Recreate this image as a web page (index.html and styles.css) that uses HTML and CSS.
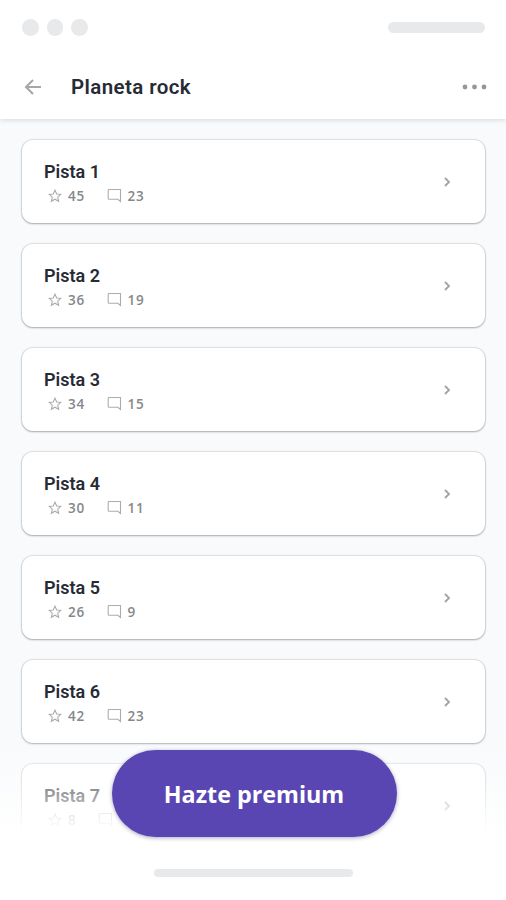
FILE: index.html
```
<!DOCTYPE html>
<html lang="es">
<head>
    <meta charset="UTF-8">
    <meta name="viewport" content="width=device-width, initial-scale=1.0">
    <title>Planeta rock</title>
    <link rel="stylesheet" href="styles.css">
</head>
<body>
    <!-- Shared icons -->
    <svg class="icon-defs" aria-hidden="true">
        <symbol id="icon-star" viewBox="0 0 14 14">
            <path d="M7 1.2l1.7 3.8 4.1.4-3.1 2.7.9 4.2L7 10.2l-3.6 2.1.9-4.2L1.2 5.4l4.1-.4z"/>
        </symbol>
        <symbol id="icon-comment" viewBox="0 0 15 15">
            <path d="M2 1.5h11.5v12l-2.6-2.2H2a.8.8 0 0 1-.8-.8V2.3a.8.8 0 0 1 .8-.8z"/>
        </symbol>
        <symbol id="icon-chevron" viewBox="0 0 8 12">
            <path d="M2 2l4 4-4 4"/>
        </symbol>
    </svg>

    <div class="phone">
        <header class="top">
            <div class="status-bar">
                <div class="dots"><span></span><span></span><span></span></div>
                <span class="pill"></span>
            </div>
            <div class="nav-bar">
                <svg class="back" viewBox="0 0 18 18"><path d="M17 9H2M9 2L2 9l7 7"/></svg>
                <h1>Planeta rock</h1>
                <svg class="more" viewBox="0 0 26 6"><circle cx="3" cy="3" r="2.4"/><circle cx="12.5" cy="3" r="2.4"/><circle cx="22" cy="3" r="2.4"/></svg>
            </div>
        </header>

        <main class="track-list">
            <article class="track">
                <div class="track-info">
                    <h2>Pista 1</h2>
                    <div class="stats">
                        <svg class="star"><use href="#icon-star"/></svg><span>45</span>
                        <svg class="comment"><use href="#icon-comment"/></svg><span>23</span>
                    </div>
                </div>
                <svg class="chevron"><use href="#icon-chevron"/></svg>
            </article>
            <article class="track">
                <div class="track-info">
                    <h2>Pista 2</h2>
                    <div class="stats">
                        <svg class="star"><use href="#icon-star"/></svg><span>36</span>
                        <svg class="comment"><use href="#icon-comment"/></svg><span>19</span>
                    </div>
                </div>
                <svg class="chevron"><use href="#icon-chevron"/></svg>
            </article>
            <article class="track">
                <div class="track-info">
                    <h2>Pista 3</h2>
                    <div class="stats">
                        <svg class="star"><use href="#icon-star"/></svg><span>34</span>
                        <svg class="comment"><use href="#icon-comment"/></svg><span>15</span>
                    </div>
                </div>
                <svg class="chevron"><use href="#icon-chevron"/></svg>
            </article>
            <article class="track">
                <div class="track-info">
                    <h2>Pista 4</h2>
                    <div class="stats">
                        <svg class="star"><use href="#icon-star"/></svg><span>30</span>
                        <svg class="comment"><use href="#icon-comment"/></svg><span>11</span>
                    </div>
                </div>
                <svg class="chevron"><use href="#icon-chevron"/></svg>
            </article>
            <article class="track">
                <div class="track-info">
                    <h2>Pista 5</h2>
                    <div class="stats">
                        <svg class="star"><use href="#icon-star"/></svg><span>26</span>
                        <svg class="comment"><use href="#icon-comment"/></svg><span>9</span>
                    </div>
                </div>
                <svg class="chevron"><use href="#icon-chevron"/></svg>
            </article>
            <article class="track">
                <div class="track-info">
                    <h2>Pista 6</h2>
                    <div class="stats">
                        <svg class="star"><use href="#icon-star"/></svg><span>42</span>
                        <svg class="comment"><use href="#icon-comment"/></svg><span>23</span>
                    </div>
                </div>
                <svg class="chevron"><use href="#icon-chevron"/></svg>
            </article>
            <article class="track">
                <div class="track-info">
                    <h2>Pista 7</h2>
                    <div class="stats">
                        <svg class="star"><use href="#icon-star"/></svg><span>8</span>
                        <svg class="comment"><use href="#icon-comment"/></svg>
                    </div>
                </div>
                <svg class="chevron"><use href="#icon-chevron"/></svg>
            </article>
        </main>

        <!-- Fades out the end of the list behind the button -->
        <div class="premium-overlay">
            <button class="premium-btn">Hazte premium</button>
            <span class="home-indicator"></span>
        </div>
    </div>
</body>
</html>
```
FILE: styles.css
```
* {
    box-sizing: border-box;
}

body {
    margin: 0;
    background: #fff;
    font-family: Roboto, "Liberation Sans", sans-serif;
    color: #272b35;
}

h1,
h2 {
    margin: 0;
    font-weight: 600;
}

.icon-defs {
    display: none;
}

.phone {
    position: relative;
    display: flex;
    flex-direction: column;
    height: 900px;
    overflow: hidden;
    background: #f8fafb;
}

/* Header */
.top {
    flex: none;
    height: 119px;
    background: #fff;
    box-shadow: 0 1px 5px rgba(40, 50, 60, 0.16);
}

.status-bar {
    display: flex;
    align-items: center;
    justify-content: space-between;
    height: 55px;
    padding: 0 21px 0 22px;
}

.dots {
    display: flex;
    gap: 8px;
}

.dots span {
    width: 16.5px;
    height: 16.5px;
    border-radius: 50%;
    background: #e8e9eb;
}

.pill {
    width: 97px;
    height: 11px;
    border-radius: 6px;
    background: #e8e9eb;
}

.nav-bar {
    display: flex;
    align-items: center;
    height: 63px;
    padding: 0 18px 0 24px;
}

.nav-bar h1 {
    flex: 1;
    margin-left: 29px;
    font-size: 20.5px;
    line-height: 24px;
    letter-spacing: 0.4px;
}

.back {
    width: 18px;
    height: 18px;
    fill: none;
    stroke: #a5a8ab;
    stroke-width: 2.1;
}

.more {
    width: 26px;
    height: 6px;
    fill: #94989a;
}

/* Track cards */
.track-list {
    display: flex;
    flex-direction: column;
    gap: 21px;
    padding: 21px 21px 0 22px;
}

.track {
    display: flex;
    flex: none;
    align-items: center;
    justify-content: space-between;
    height: 83px;
    padding: 0 34px 0 22px;
    border-radius: 11px;
    background: #fff;
    box-shadow: 0 0 1px 1px rgba(50, 65, 75, 0.13), 0 1px 2px rgba(40, 50, 55, 0.3);
}

.track-info {
    padding-top: 4px;
}

.track h2 {
    font-size: 18px;
    line-height: 24px;
}

.stats {
    display: flex;
    align-items: center;
    height: 24px;
    padding-left: 4px;
    color: #85888a;
    font-family: "Open Sans", "Noto Sans", sans-serif;
    font-size: 13.5px;
    font-weight: 600;
    letter-spacing: 0.8px;
}

.stats svg {
    fill: none;
    stroke: #aaadaf;
    stroke-width: 1.1;
}

.star {
    width: 14px;
    height: 14px;
    margin-right: 6px;
}

.comment {
    width: 15px;
    height: 15px;
    margin: 0 6px 0 21.5px;
}

.chevron {
    width: 8px;
    height: 12px;
    fill: none;
    stroke: #a0a2a4;
    stroke-width: 1.8;
}

/* Premium call to action */
.premium-overlay {
    position: absolute;
    right: 0;
    bottom: 0;
    left: 0;
    display: flex;
    flex-direction: column;
    align-items: center;
    height: 170px;
    padding-top: 20px;
    background: linear-gradient(rgba(255, 255, 255, 0) 0, rgba(255, 255, 255, 0.5) 62px, #fff 102px);
}

.premium-btn {
    width: 285px;
    height: 87px;
    padding: 0;
    margin-left: 2px;
    border: 0;
    border-radius: 44px;
    background: #5a46b3;
    box-shadow: 0 1px 4px rgba(50, 40, 90, 0.4);
    color: #fff;
    font-family: "Open Sans", "Noto Sans", sans-serif;
    font-size: 23.3px;
    font-weight: 700;
}

.home-indicator {
    width: 199px;
    height: 8px;
    margin-top: 32px;
    border-radius: 4px;
    background: #e8e9eb;
}
```
